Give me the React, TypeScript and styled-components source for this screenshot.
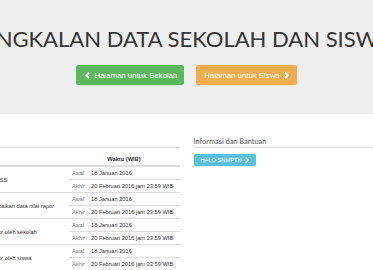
import { Fragment } from 'react';
import styled, { createGlobalStyle } from 'styled-components';

const GlobalStyle = createGlobalStyle`
  html, body {
    margin: 0;
    padding: 0;
    background: #fff;
    overflow: hidden;
  }
  body {
    font-family: "Liberation Sans", Arial, sans-serif;
    color: #333;
  }
`;

const Jumbotron = styled.header`
  background-color: #eee;
  height: 114px;
  padding-top: 27px;
  box-sizing: border-box;
  display: flex;
  flex-direction: column;
  align-items: center;
  overflow: hidden;
`;

const Title = styled.h1`
  margin: 0 12px 0 0;
  font-family: Lato, "Liberation Sans", sans-serif;
  font-weight: 400;
  font-size: 22px;
  line-height: 1.1;
  color: #333;
  white-space: nowrap;
  flex-shrink: 0;
`;

const ButtonRow = styled.div`
  display: flex;
  gap: 12px;
  margin-top: 14px;
`;

const BigButton = styled.a<{ $bg: string }>`
  display: flex;
  align-items: center;
  gap: 3px;
  height: 20px;
  padding: 0 7px 0 8px;
  box-sizing: border-box;
  border-radius: 2px;
  background-color: ${(p) => p.$bg};
  color: #fff;
  font-size: 7.8px;
  text-decoration: none;
  white-space: nowrap;
`;

const Container = styled.main`
  display: flex;
  justify-content: center;
  overflow: hidden;
`;

const Row = styled.div`
  flex-shrink: 0;
  width: 562px;
  display: grid;
  grid-template-columns: 1fr 1fr;
  column-gap: 14px;
`;

const Table = styled.table`
  width: 100%;
  margin-top: 33px;
  border-collapse: collapse;
  table-layout: fixed;
  font-size: 5.7px;

  th {
    height: 14px;
    padding: 0 3.5px 3px;
    vertical-align: bottom;
    font-weight: 700;
    border-top: 1px solid #e6e6e6;
    border-bottom: 2px solid #ddd;
  }
  td {
    height: 12px;
    padding: 0 3.5px;
    border-top: 1px solid #ddd;
    vertical-align: middle;
    white-space: nowrap;
    overflow: hidden;
  }
`;

const Label = styled.td`
  color: #777;
`;

const Heading = styled.h4`
  margin: 24px 0 0;
  padding-bottom: 1px;
  font-family: Lato, "Liberation Sans", sans-serif;
  font-weight: 400;
  font-size: 7.4px;
  line-height: 1.1;
  color: #555;
  border-bottom: 1px solid #e6e6e6;
`;

const InfoButton = styled.a`
  display: inline-flex;
  align-items: center;
  gap: 2px;
  margin-top: 3px;
  height: 11.5px;
  padding: 0 6px 0 7px;
  border-radius: 2px;
  background-color: #5bc0de;
  color: #fff;
  font-size: 5.7px;
  text-decoration: none;
`;

function Chevron({ dir, size }: { dir: 'left' | 'right'; size: number }) {
  const pts = dir === 'left' ? '7,1 3,5 7,9' : '3,1 7,5 3,9';
  return (
    <svg width={size} height={size} viewBox="0 0 10 10">
      <polyline points={pts} fill="none" stroke="#fff" strokeWidth="2.8" strokeLinejoin="miter" />
    </svg>
  );
}

const schedule = [
  'Registrasi sekolah dan siswa ke PDSS',
  'Melengkapi biodata siswa serta perbaikan data nilai rapor',
  'Pemeriksaan dan finalisasi nilai rapor oleh sekolah',
  'Pemeriksaan dan finalisasi nilai rapor oleh siswa',
];

export default function App() {
  return (
    <>
      <GlobalStyle />
      <Jumbotron>
        <Title>PANGKALAN DATA SEKOLAH DAN SISWA</Title>
        <ButtonRow>
          <BigButton $bg="#5cb85c" href="#">
            <Chevron dir="left" size={7} />
            Halaman untuk Sekolah
          </BigButton>
          <BigButton $bg="#f0ad4e" href="#">
            Halaman untuk Siswa
            <Chevron dir="right" size={7} />
          </BigButton>
        </ButtonRow>
      </Jumbotron>
      <Container>
        <Row>
          <section>
            <Table>
              <colgroup>
                <col style={{ width: 163 }} />
                <col style={{ width: 19 }} />
                <col />
              </colgroup>
              <thead>
                <tr>
                  <th style={{ textAlign: 'left' }}>Kegiatan</th>
                  <th colSpan={2}>Waktu (WIB)</th>
                </tr>
              </thead>
              <tbody>
                {schedule.map((item) => (
                  <Fragment key={item}>
                    <tr>
                      <td rowSpan={2}>{item}</td>
                      <Label>Awal</Label>
                      <td>18 Januari 2016</td>
                    </tr>
                    <tr>
                      <Label>Akhir</Label>
                      <td>20 Februari 2016 jam 23:59 WIB</td>
                    </tr>
                  </Fragment>
                ))}
              </tbody>
            </Table>
          </section>
          <aside>
            <Heading>Informasi dan Bantuan</Heading>
            <InfoButton href="#">
              HALO SNMPTN
              <Chevron dir="right" size={6} />
            </InfoButton>
          </aside>
        </Row>
      </Container>
    </>
  );
}
